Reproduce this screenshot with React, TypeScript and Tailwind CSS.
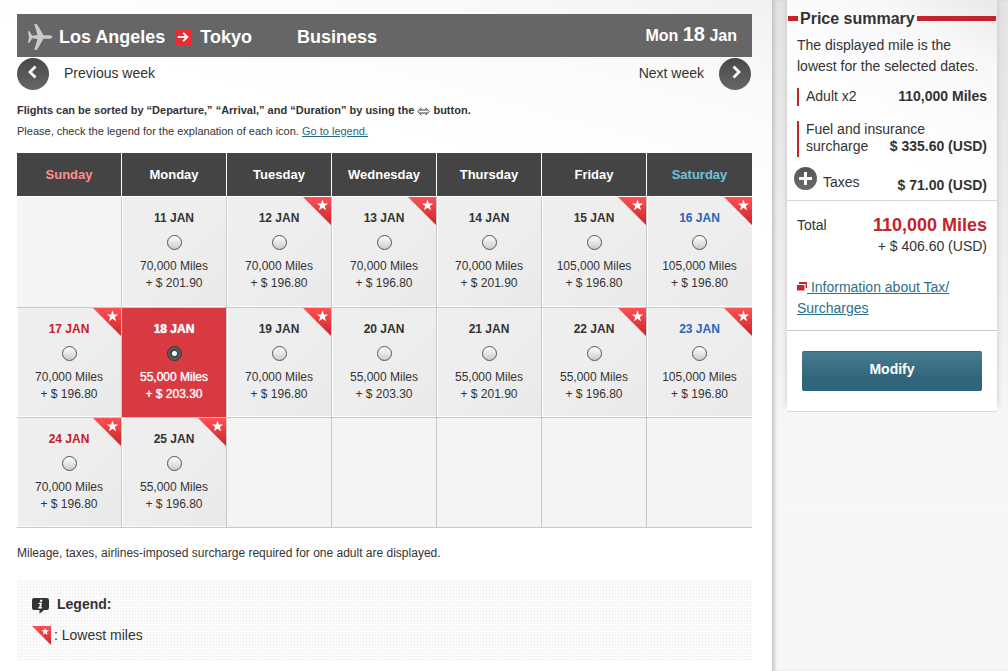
import { useState } from "react";

type Day = { d: number; miles: string; fee: string; low?: boolean } | null;

const weeks: Day[][] = [
  [
    null,
    { d: 11, miles: "70,000", fee: "201.90" },
    { d: 12, miles: "70,000", fee: "196.80", low: true },
    { d: 13, miles: "70,000", fee: "196.80", low: true },
    { d: 14, miles: "70,000", fee: "201.90" },
    { d: 15, miles: "105,000", fee: "196.80", low: true },
    { d: 16, miles: "105,000", fee: "196.80", low: true },
  ],
  [
    { d: 17, miles: "70,000", fee: "196.80", low: true },
    { d: 18, miles: "55,000", fee: "203.30" },
    { d: 19, miles: "70,000", fee: "196.80", low: true },
    { d: 20, miles: "55,000", fee: "203.30" },
    { d: 21, miles: "55,000", fee: "201.90" },
    { d: 22, miles: "55,000", fee: "196.80", low: true },
    { d: 23, miles: "105,000", fee: "196.80", low: true },
  ],
  [
    { d: 24, miles: "70,000", fee: "196.80", low: true },
    { d: 25, miles: "55,000", fee: "196.80", low: true },
    null,
    null,
    null,
    null,
    null,
  ],
];

const dayNames = ["Sunday", "Monday", "Tuesday", "Wednesday", "Thursday", "Friday", "Saturday"];

function LowestMark({ id, className }: { id: string; className: string }) {
  return (
    <svg viewBox="0 0 28 28" className={className} aria-hidden="true">
      <defs>
        <linearGradient id={id} x1="0" y1="0" x2="0" y2="1">
          <stop offset="0" stopColor="#ff5053" />
          <stop offset="1" stopColor="#c9252c" />
        </linearGradient>
      </defs>
      <path d="M0 0H28V28Z" fill={`url(#${id})`} />
      <path
        d="M19.500 2.400l1.400 4h4.300l-3.400 2.600 1.300 4.200-3.600-2.500-3.600 2.500 1.300-4.200-3.400-2.600h4.300z"
        fill="#fff"
      />
    </svg>
  );
}

function Plane() {
  return (
    <svg viewBox="0 0 26 26" className="h-[26px] w-[26px] shrink-0" aria-hidden="true">
      <path
        d="M25.300 13c0 .9-1.300 1.700-3 1.700h-5.800L10.500 25c-.4.600-.8.900-1.500.9H7.300L10.500 14.900 5.200 14.300 2.400 18.800H.9L2 13 .9 7.200h1.500l2.800 4.500 5.300-.6L7.300.1H9c.7 0 1.100.3 1.500.9l6 10.300h5.800c1.700 0 3 .8 3 1.700z"
        fill="#cacaca"
      />
    </svg>
  );
}

function Chevron({ d }: { d: string }) {
  return (
    <svg viewBox="0 0 32 32" className="h-8 w-8" fill="none" stroke="#fff" strokeWidth="2.800" aria-hidden="true">
      <path d={d} />
    </svg>
  );
}

const roundButton =
  "h-8 w-8 shrink-0 rounded-full bg-linear-to-b from-[#484848] to-[#676767]";

export default function App() {
  const [selected, setSelected] = useState(18);

  return (
    <div className="flex min-h-screen bg-white font-['Liberation_Sans',Arial,sans-serif] text-sm text-[#333]">
      <main className="min-w-0 flex-1 bg-[linear-gradient(195deg,#f1f1f1_0px,#fafafa_90px,#ffffff_220px)] pt-3.5 pr-5 pb-2.5 pl-[17px]">
        <header className="flex h-[43px] items-center bg-[#666] pr-[15px] pl-2.5 font-bold text-white">
          <div className="flex flex-1 items-center pt-[3px]">
            <Plane />
            <h1 className="ml-1.5 flex items-center text-lg">
              Los Angeles
              <svg viewBox="0 0 16 16" className="mr-[9px] ml-2.5 h-4 w-4" role="img" aria-label="to">
                <path d="M0 0H16V16H0Z" fill="#ed2a30" />
                <path d="M2.800 8H12M8.200 3.800L12.400 8L8.200 12.200" fill="none" stroke="#fff" strokeWidth="1.900" />
              </svg>
              Tokyo
            </h1>
            <span className="ml-[45px] text-lg">Business</span>
          </div>
          <p className="pb-1 text-base">
            Mon <span className="text-xl">18</span> Jan
          </p>
        </header>

        <nav className="flex justify-between pt-px pr-px">
          <div className="flex items-center gap-[15px]">
            <button id="prev" type="button" aria-label="Previous week" className={roundButton}>
              <Chevron d="M18.500 8.500L13 14L18.500 19.500" />
            </button>
            <label htmlFor="prev" className="pb-0.5">Previous week</label>
          </div>
          <div className="flex items-center gap-[15px]">
            <label htmlFor="next" className="pb-0.5">Next week</label>
            <button id="next" type="button" aria-label="Next week" className={roundButton}>
              <Chevron d="M14.500 8.500L20 14L14.500 19.500" />
            </button>
          </div>
        </nav>

        <p className="mt-2.5 text-[11px] leading-[21px] font-bold">
          Flights can be sorted by “Departure,” “Arrival,” and “Duration” by using the{" "}
          <svg viewBox="0 0 13 9" className="inline-block h-[9px] w-[13px]" fill="none" stroke="#333" aria-hidden="true">
            <path d="M3 3H10M3 6H10M4.500 .8L.8 4.500L4.500 8.200M8.500 .8L12.200 4.500L8.500 8.200" />
          </svg>{" "}
          button.
        </p>
        <p className="text-[11px] leading-[21px]">
          Please, check the legend for the explanation of each icon.{" "}
          <a href="#legend" className="text-[#26687f] underline">Go to legend.</a>
        </p>

        <table className="mt-[11px] w-full table-fixed border-separate border-spacing-0 text-center">
          <thead>
            <tr>
              {dayNames.map((name, i) => (
                <th
                  key={name}
                  scope="col"
                  className={`h-11 border-r border-b border-white bg-[#444] bg-clip-padding p-0 pt-0.5 text-[13px] last:border-r-0 ${
                    i === 0 ? "text-[#ff8f93]" : i === 6 ? "text-[#6fc3df]" : "text-white"
                  }`}
                >
                  {name}
                </th>
              ))}
            </tr>
          </thead>
          <tbody>
            {weeks.map((week, w) => (
              <tr key={w} className="h-[110px] first:h-[111px]">
                {week.map((day, i) => {
                  if (!day)
                    return (
                      <td key={i} className="border-r border-b border-[#c8c8c8] bg-[#f4f4f4] p-0 last:border-r-0" />
                    );
                  const on = selected === day.d;
                  return (
                    <td
                      key={i}
                      className={`relative border-r border-b border-[#c8c8c8] p-0 align-top last:border-r-0 ${
                        on
                          ? "bg-[#d73a40] text-white"
                          : "bg-linear-to-br from-[#eeeeee] via-[#eeeeee] to-[#e9e9e9] shadow-[inset_1px_-1px_0_#fff]"
                      }`}
                    >
                      {day.low && <LowestMark id={`low${day.d}`} className="absolute top-0 right-0 h-7 w-7" />}
                      <label
                        className={`flex flex-col items-center pt-[13px] text-xs leading-[17px] ${
                          on ? "[text-shadow:0_0_1px_#fff]" : ""
                        }`}
                      >
                        <span
                          className={`font-bold ${
                            on ? "" : i === 0 ? "text-[#c1202a]" : i === 6 ? "text-[#2766b8]" : ""
                          }`}
                        >
                          {day.d} JAN
                        </span>
                        <input
                          type="radio"
                          name="day"
                          checked={on}
                          onChange={() => setSelected(day.d)}
                          className="mt-2 mb-2 h-[15px] w-[15px] appearance-none rounded-full border border-[#555] bg-linear-to-b from-white to-[#cccccc] checked:border-[#333] checked:bg-[radial-gradient(circle,#fff_0px,#fff_2px,#444_3px,#666_7px)]"
                        />
                        <span>{day.miles} Miles</span>
                        <span>+ $ {day.fee}</span>
                      </label>
                    </td>
                  );
                })}
              </tr>
            ))}
          </tbody>
        </table>

        <p className="mt-[17px] text-xs leading-4">
          Mileage, taxes, airlines-imposed surcharge required for one adult are displayed.
        </p>

        <section
          id="legend"
          className="mt-[19px] bg-[#fbfbfb] bg-[radial-gradient(#e9e9e9_0.8px,transparent_0.8px)] bg-[size:3px_3px] pt-3.5 pb-4 pl-[15px]"
        >
          <h2 className="flex h-5 items-center font-bold">
            <svg viewBox="0 0 17 16" className="mt-1 mr-2 h-4 w-[17px]" aria-hidden="true">
              <path d="M2 0H15Q17 0 17 2V10Q17 12 15 12H12L7.500 15.800V12H2Q0 12 0 10V2Q0 0 2 0Z" fill="#333" />
              <path d="M8.200 1.800H10.500L10.100 3.700H7.900ZM6.800 4.700H10L9.100 9H10.200L9.900 10.400H6.200L6.500 9.100H7.300L7.900 6H6.500Z" fill="#fff" />
            </svg>
            Legend:
          </h2>
          <p className="mt-[11px] flex h-5 items-center">
            <LowestMark id="lowLegend" className="mr-[3px] h-[19px] w-[19px]" />: Lowest miles
          </p>
        </section>
      </main>

      <aside className="w-[236px] shrink-0 bg-linear-to-b from-[#e3e3e3] via-[#ececec] via-30% to-[#f7f7f7] to-65% pr-[11px] pl-[15px] shadow-[inset_4px_0_4px_-2px_#bdbdbd]">
        <section className="border-b border-[#d8d8d8] bg-white bg-[linear-gradient(210deg,#e9e9e9_0px,#f8f8f8_60px,#ffffff_180px)] pt-2 shadow-[0_-6px_6px_#c4c4c4]">
          <h2 className="flex items-center gap-0.5 px-px text-base leading-[21px] font-bold">
            <span className="h-[5px] w-2.5 bg-[#c4232a]" />
            Price summary
            <span className="h-[5px] flex-1 bg-[#c4232a]" />
          </h2>
          <div className="px-2.5 pt-1.5">
            <p className="leading-[21px]">The displayed mile is the lowest for the selected dates.</p>
            <dl>
              <div className="mt-[11px] flex justify-between border-l-2 border-[#c4232a] pb-0.5 pl-[7px] leading-4">
                <dt>Adult x2</dt>
                <dd className="font-bold">110,000 Miles</dd>
              </div>
              <div className="mt-[15px] flex flex-wrap justify-between border-l-2 border-[#c4232a] pb-0.5 pl-[7px] leading-[17px]">
                <dt className="contents">
                  <span className="w-full">Fuel and insurance</span>
                  <span>surcharge</span>
                </dt>
                <dd className="font-bold">$ 335.60 (USD)</dd>
              </div>
            </dl>
          </div>
          <div className="flex h-[44px] items-center justify-between border-b border-[#d8d8d8] pr-2.5 pl-[7px]">
            <div className="flex items-center gap-1.5">
              <button type="button" aria-label="Show taxes" className="h-[23px] w-[23px] rounded-full bg-linear-to-b from-[#555] to-[#6c6c6c]">
                <svg viewBox="0 0 23 23" className="h-[23px] w-[23px]" stroke="#fff" strokeWidth="3" aria-hidden="true">
                  <path d="M11.500 5V18M5 11.500H18" />
                </svg>
              </button>
              <span className="pt-1.5">Taxes</span>
            </div>
            <span className="pt-3 font-bold">$ 71.00 (USD)</span>
          </div>
          <div className="flex justify-between px-2.5 pt-3.5 leading-[21px]">
            <span>Total</span>
            <p className="text-right">
              <strong className="block text-lg leading-[21px] text-[#c4232a]">110,000 Miles</strong>
              + $ 406.60 (USD)
            </p>
          </div>
          <p className="mt-5 border-b border-[#c8c8c8] px-2.5 pb-[11px] leading-[21px]">
            <a href="#tax" className="text-[#2b7087] underline">
              <svg viewBox="0 0 10 9" className="mb-1 inline-block h-[9px] w-2.5" aria-hidden="true">
                <path d="M2 0H10V6H8.600V2H2Z" fill="#c9252c" />
                <path d="M0 3H7.500V8.500H0Z" fill="#c9252c" />
              </svg>
              {" "}Information about Tax/<br />Surcharges
            </a>
          </p>
          <div className="px-[15px] py-5">
            <button
              type="button"
              className="h-10 w-full rounded-xs border-t border-[#3a6a7d] bg-linear-to-b from-[#487c8f] to-[#2f647a] to-70% pb-1.5 font-bold text-white"
            >
              Modify
            </button>
          </div>
        </section>
      </aside>
    </div>
  );
}
